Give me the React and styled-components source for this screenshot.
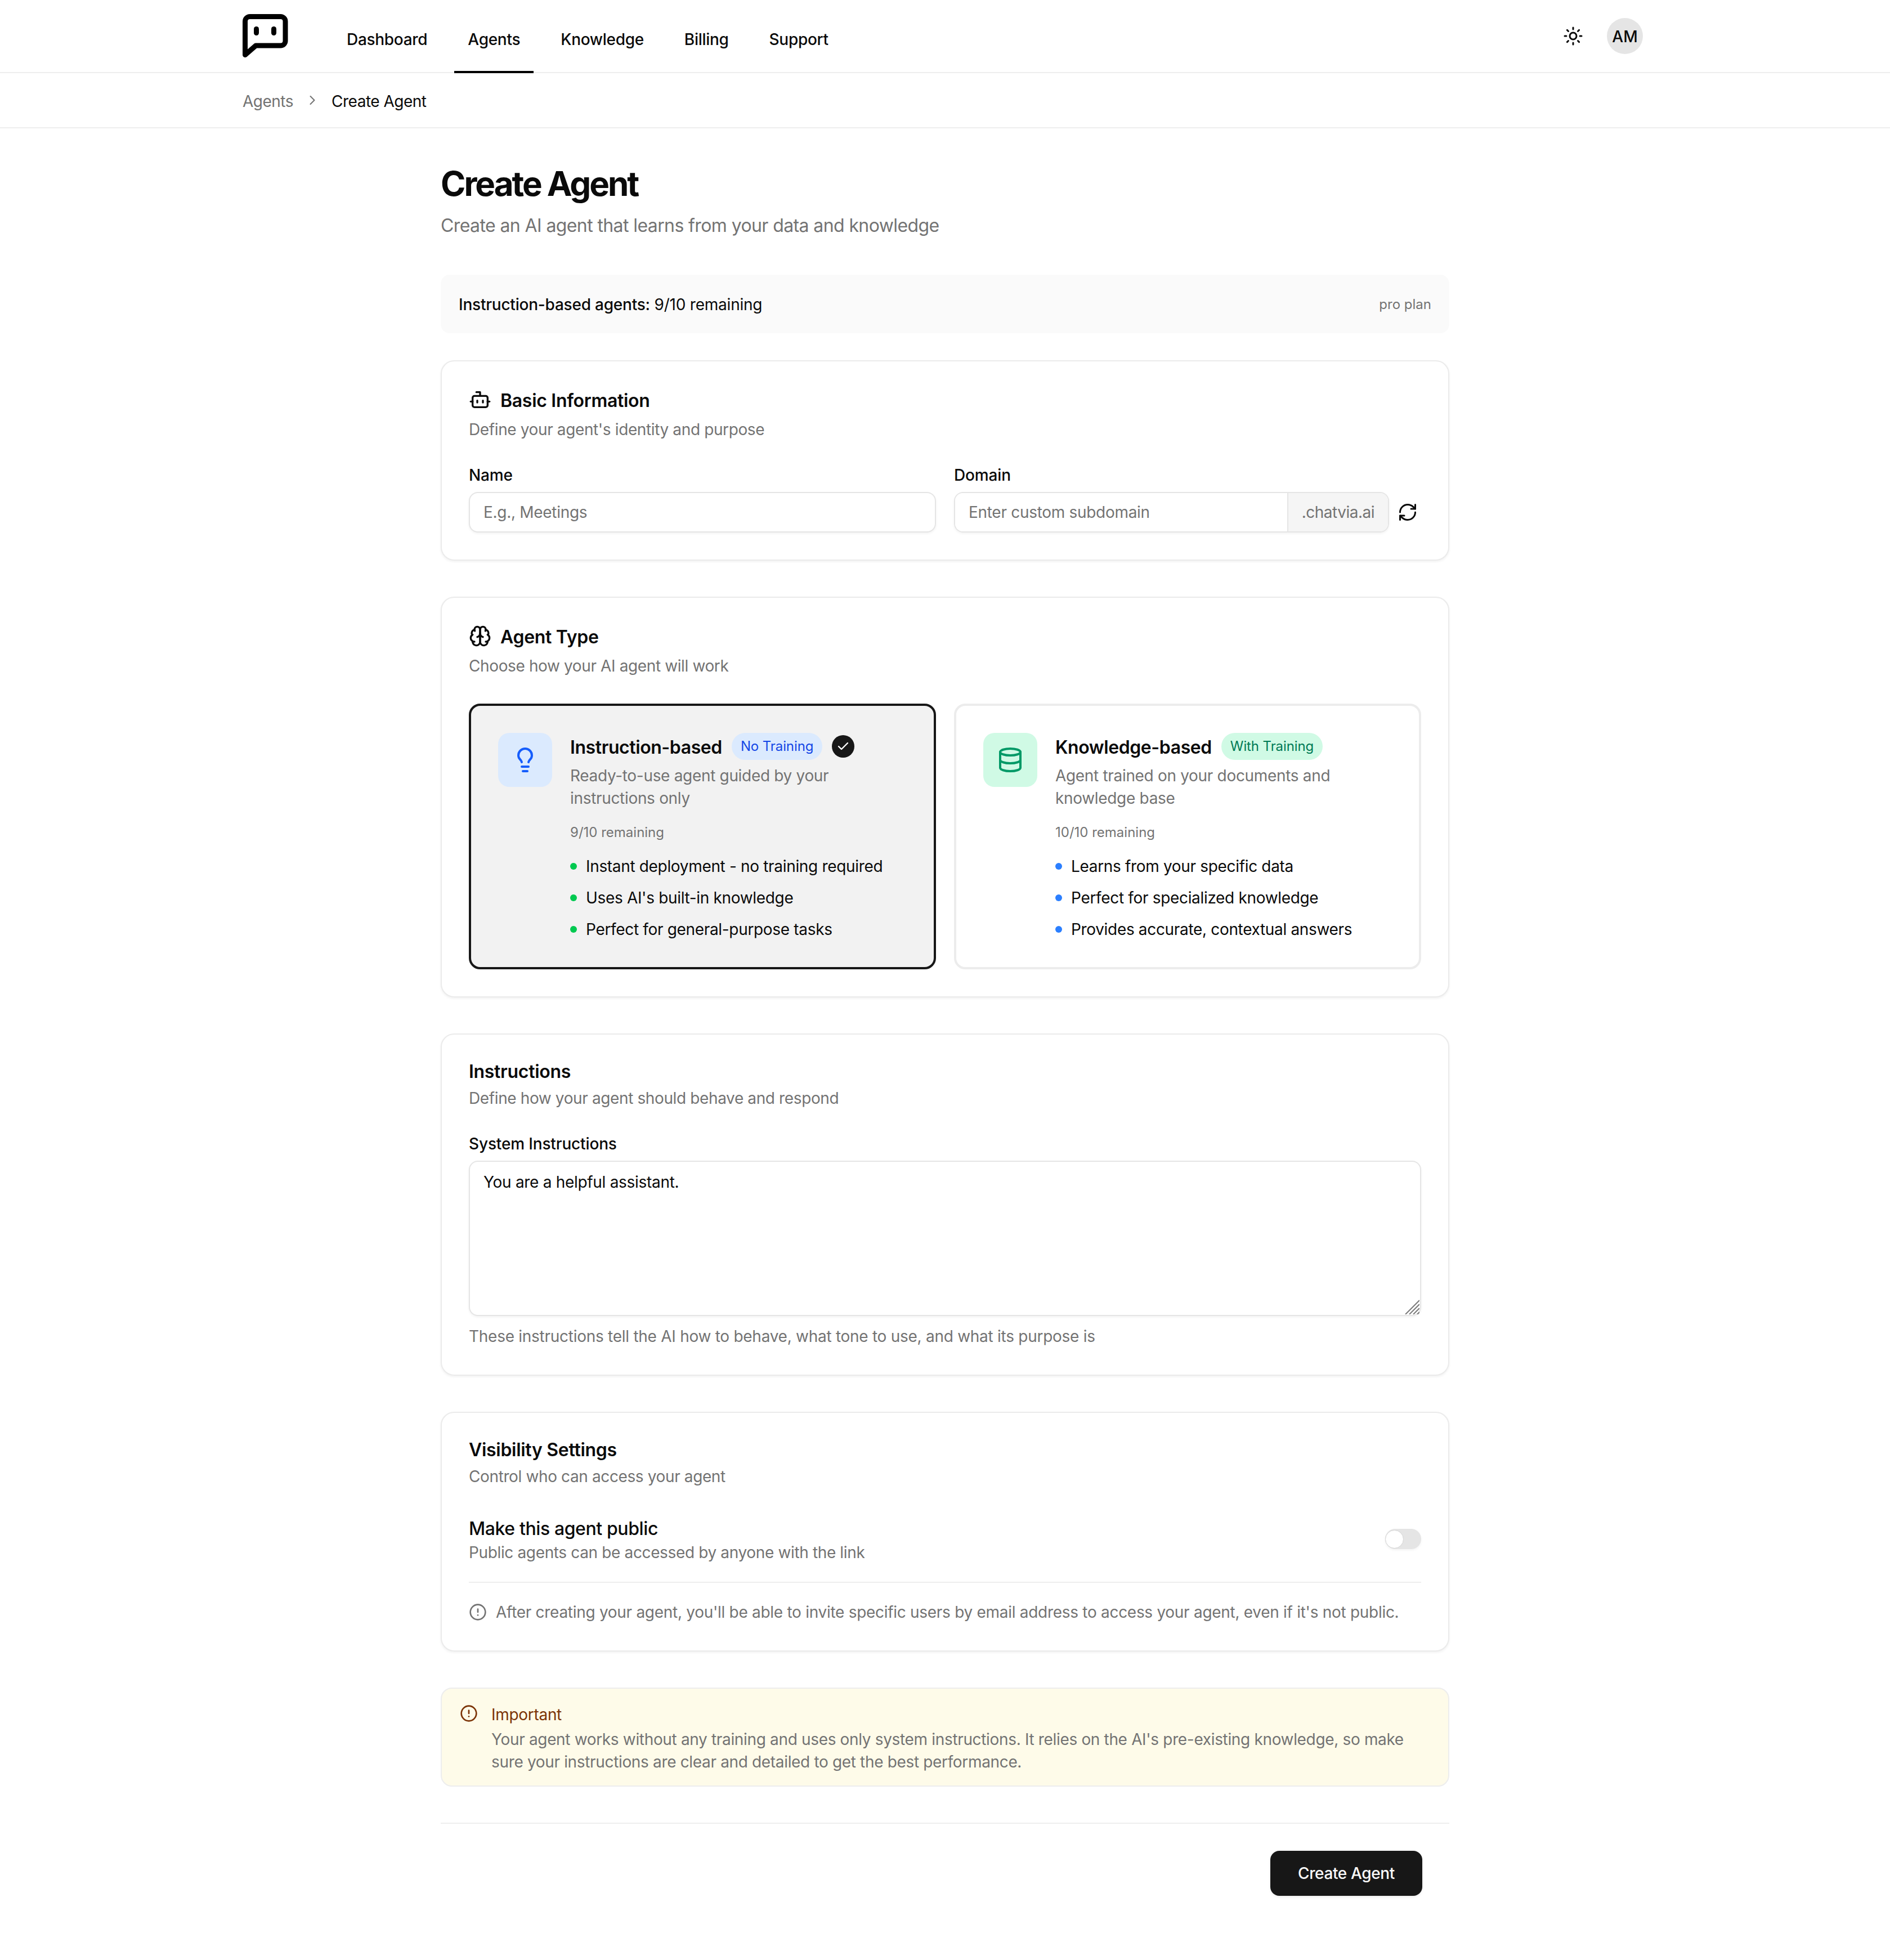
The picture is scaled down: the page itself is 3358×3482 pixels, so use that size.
import React from "react";
import styled, { createGlobalStyle, css } from "styled-components";
import { Sun, Bot, Lightbulb, Database, RefreshCw, CircleAlert, ChevronRight, Check } from "lucide-react";

const Global = createGlobalStyle`
  * { box-sizing: border-box; }
  html, body { margin: 0; padding: 0; background: #fff; }
  body {
    font-family: Inter, "Liberation Sans", sans-serif;
    font-size: 28px;
    line-height: 40px;
    letter-spacing: -0.3px;
    color: #0a0a0a;
  }
  input, textarea, button { font-family: inherit; }
`;

const Header = styled.header`
  height: 130px;
  border-bottom: 2px solid #eeeeee;
`;
const HeaderInner = styled.div`
  width: 2560px;
  height: 100%;
  margin: 0 auto;
  padding: 0 40px 0 32px;
  display: flex;
  align-items: center;
`;
const LogoMark = styled.svg`
  width: 81px;
  height: 78px;
  flex: none;
  display: block;
`;
const Nav = styled.nav`
  align-self: flex-end;
  display: flex;
  gap: 24px;
  height: 122px;
  margin: 0 0 -2px 80px;
`;
const Tab = styled.a`
  display: flex;
  align-items: center;
  padding: 6px 24px 0;
  font-weight: 500;
  letter-spacing: -0.3px;
  color: #0a0a0a;
  border-bottom: 4px solid ${(p) => (p.$active ? "#000" : "transparent")};
`;
const HeaderTools = styled.div`
  margin-left: auto;
  display: flex;
  align-items: center;
  gap: 42px;
`;
const Avatar = styled.div`
  width: 64px;
  height: 64px;
  padding-top: 1px;
  border-radius: 50%;
  background: #e5e5e5;
  display: flex;
  align-items: center;
  justify-content: center;
  font-weight: 500;
  letter-spacing: 0;
`;
const CrumbBar = styled.div`
  height: 98px;
  border-bottom: 2px solid #eeeeee;
`;
const CrumbInner = styled.div`
  width: 2560px;
  height: 100%;
  margin: 0 auto;
  padding: 0 32px;
  display: flex;
  align-items: center;
  gap: 20px;
`;
const CrumbLink = styled.span`
  padding-top: 3px;
  letter-spacing: -0.5px;
  color: #737373;
`;
const CrumbCurrent = styled.span`
  padding-top: 3px;
  letter-spacing: -0.5px;
  color: #0a0a0a;
`;
const Main = styled.main`
  width: 1792px;
  margin: 0 auto;
  padding: 64px 0 114px;
`;
const PageTitle = styled.h1`
  margin: 0;
  font-size: 60px;
  line-height: 68px;
  font-weight: 700;
  letter-spacing: -3px;
  color: #0a0a0a;
`;
const PageSub = styled.p`
  margin: 17px 0 63px;
  font-size: 32px;
  line-height: 48px;
  letter-spacing: -0.6px;
  color: #737373;
`;
const Usage = styled.div`
  height: 104px;
  margin-bottom: 48px;
  padding: 1px 32px 0;
  border-radius: 16px;
  background: #fafafa;
  display: flex;
  align-items: center;
  justify-content: space-between;
  letter-spacing: -0.22px;
`;
const UsageStrong = styled.span`
  font-weight: 500;
`;
const UsagePlan = styled.span`
  font-size: 24px;
  letter-spacing: 0;
  color: #737373;
`;
const Form = styled.form`
  display: flex;
  flex-direction: column;
  gap: 64px;
`;
const Card = styled.section`
  padding: 48px;
  background: #fff;
  border: 2px solid #ebebeb;
  border-radius: 24px;
  box-shadow: 0 2px 4px rgba(0, 0, 0, 0.06);
`;
const CardHead = styled.div`
  display: flex;
  align-items: center;
  gap: 16px;
  font-size: 32px;
  font-weight: 600;
  letter-spacing: -0.3px;
  color: #0a0a0a;
`;
const CardHeadText = styled.span`
  line-height: 36px;
  margin-bottom: -4px;
`;
const CardSub = styled.p`
  margin: 13px 0 47px;
  letter-spacing: -0.38px;
  color: #737373;
`;
const TwoCols = styled.div`
  display: grid;
  grid-template-columns: 1fr 1fr;
  gap: 32px;
`;
const Label = styled.label`
  display: block;
  font-weight: 500;
  line-height: 28px;
  letter-spacing: -0.15px;
  margin-bottom: 16px;
`;
const fieldText = css`
  font-size: 28px;
  line-height: 40px;
  letter-spacing: -0.3px;
  color: #0a0a0a;
  &::placeholder {
    color: #737373;
    opacity: 1;
  }
`;
const TextInput = styled.input`
  ${fieldText}
  display: block;
  width: 100%;
  height: 72px;
  padding: 0 24px;
  border: 2px solid #e5e5e5;
  border-radius: 16px;
  background: #fff;
  box-shadow: 0 2px 4px rgba(0, 0, 0, 0.05);
  outline: none;
`;
const DomainRow = styled.div`
  display: flex;
  align-items: center;
  gap: 8px;
`;
const DomainGroup = styled.div`
  flex: 1;
  display: flex;
  height: 72px;
  border: 2px solid #e5e5e5;
  border-radius: 16px;
  overflow: hidden;
  box-shadow: 0 2px 4px rgba(0, 0, 0, 0.05);
`;
const DomainInput = styled.input`
  ${fieldText}
  flex: 1;
  min-width: 0;
  padding: 0 24px;
  border: 0;
  outline: none;
  background: #fff;
`;
const DomainSuffix = styled.span`
  display: flex;
  align-items: center;
  padding: 0 24px;
  border-left: 2px solid #e5e5e5;
  background: #f5f5f5;
  letter-spacing: -0.5px;
  color: #737373;
`;
const IconButton = styled.button`
  width: 49px;
  height: 72px;
  flex: none;
  padding: 0;
  border: 0;
  background: transparent;
  color: #0a0a0a;
  display: flex;
  align-items: center;
  justify-content: center;
`;
const OptionCard = styled.div`
  display: flex;
  gap: 32px;
  height: 472px;
  padding: 48px;
  border: 4px solid ${(p) => (p.$selected ? "#171717" : "#ececec")};
  border-radius: 20px;
  background: ${(p) => (p.$selected ? "#f2f2f2" : "#fff")};
`;
const toneBg = { blue: "#dbeafe", green: "#d0fae5" };
const IconTile = styled.div`
  width: 96px;
  height: 96px;
  flex: none;
  border-radius: 20px;
  display: flex;
  align-items: center;
  justify-content: center;
  background: ${(p) => toneBg[p.$tone]};
  color: ${(p) => (p.$tone === "blue" ? "#155dfc" : "#009966")};
`;
const OptionBody = styled.div`
  flex: 1;
  min-width: 0;
`;
const OptionTitleRow = styled.div`
  display: flex;
  align-items: center;
  gap: 17px;
  height: 48px;
`;
const OptionTitle = styled.span`
  font-size: 32px;
  line-height: 40px;
  margin-top: 3px;
  font-weight: 600;
  letter-spacing: -0.42px;
  color: #0a0a0a;
`;
const Pill = styled.span`
  height: 48px;
  padding: 0 16px;
  border-radius: 24px;
  display: flex;
  align-items: center;
  font-size: 24px;
  font-weight: 400;
  letter-spacing: -0.1px;
  background: ${(p) => toneBg[p.$tone]};
  color: ${(p) => (p.$tone === "blue" ? "#1447e6" : "#007a55")};
`;
const CheckBadge = styled.span`
  width: 40px;
  height: 40px;
  border-radius: 50%;
  background: #171717;
  color: #fff;
  display: flex;
  align-items: center;
  justify-content: center;
`;
const OptionDesc = styled.p`
  margin: 8px 0 25px;
  letter-spacing: -0.32px;
  color: #737373;
`;
const Remaining = styled.div`
  font-size: 24px;
  line-height: 32px;
  letter-spacing: 0;
  color: #737373;
  margin-bottom: 24px;
`;
const Bullets = styled.ul`
  margin: 0;
  padding: 0;
  list-style: none;
  display: flex;
  flex-direction: column;
  gap: 16px;
`;
const Bullet = styled.li`
  display: flex;
  align-items: center;
  gap: 16px;
  letter-spacing: -0.33px;
  color: #0a0a0a;
`;
const Dot = styled.span`
  width: 12px;
  height: 12px;
  flex: none;
  border-radius: 50%;
  background: ${(p) => (p.$tone === "green" ? "#00c950" : "#2b7fff")};
`;
const TextAreaWrap = styled.div`
  position: relative;
`;
const TextArea = styled.textarea`
  ${fieldText}
  display: block;
  width: 100%;
  height: 276px;
  padding: 16px 24px;
  border: 2px solid #e5e5e5;
  border-radius: 16px;
  background: #fff;
  box-shadow: 0 2px 4px rgba(0, 0, 0, 0.05);
  outline: none;
  resize: none;
`;
const Grip = styled.svg`
  position: absolute;
  right: 3px;
  bottom: 3px;
  width: 26px;
  height: 26px;
`;
const Helper = styled.p`
  margin: 16px 0 0;
  letter-spacing: -0.27px;
  color: #737373;
`;
const ToggleRow = styled.div`
  display: flex;
  align-items: center;
  justify-content: space-between;
  padding-bottom: 32px;
  border-bottom: 2px solid #eeeeee;
`;
const ToggleTitle = styled.div`
  font-size: 32px;
  line-height: 52px;
  margin-bottom: -4px;
  font-weight: 500;
  letter-spacing: -0.4px;
  color: #0a0a0a;
`;
const ToggleSub = styled.div`
  letter-spacing: -0.36px;
  color: #737373;
`;
const Switch = styled.span`
  width: 64px;
  height: 36px;
  border-radius: 18px;
  background: #e5e5e5;
  display: flex;
  align-items: center;
  box-shadow: 0 2px 4px rgba(0, 0, 0, 0.05);
`;
const Thumb = styled.span`
  width: 33px;
  height: 33px;
  border-radius: 50%;
  background: #fff;
  border: 1px solid #d4d4d4;
`;
const InfoLine = styled.div`
  display: flex;
  align-items: center;
  gap: 16px;
  padding-top: 32px;
  letter-spacing: -0.29px;
  color: #737373;
`;
const Notice = styled.div`
  display: flex;
  gap: 24px;
  padding: 26px 32px 22px;
  border: 2px solid #ededed;
  border-radius: 20px;
  background: #fefbe9;
`;
const NoticeIcon = styled.div`
  flex: none;
  width: 32px;
  height: 32px;
  margin-top: 2px;
  color: #7b3306;
`;
const NoticeTitle = styled.div`
  color: #7b3306;
  margin-bottom: 4px;
`;
const NoticeText = styled.div`
  letter-spacing: -0.34px;
  color: #737373;
`;
const Footer = styled.div`
  display: flex;
  justify-content: flex-end;
  padding: 48px 48px 0 0;
  border-top: 2px solid #eeeeee;
`;
const Submit = styled.button`
  height: 80px;
  width: 270px;
  border: 0;
  border-radius: 16px;
  background: #171717;
  color: #fafafa;
  font-size: 28px;
  font-weight: 500;
  letter-spacing: -0.37px;
  box-shadow: 0 2px 4px rgba(0, 0, 0, 0.08);
`;
const IconSlot = styled.span`
  flex: none;
  display: flex;
`;

const BrainIcon = () => (
  <svg width="40" height="40" viewBox="0 0 24 24" fill="none" stroke="currentColor" strokeWidth="2" strokeLinecap="round" strokeLinejoin="round">
    <path d="M12 5a3 3 0 1 0-5.997.125 4 4 0 0 0-2.526 5.77 4 4 0 0 0 .556 6.588A4 4 0 1 0 12 18Z" />
    <path d="M12 5a3 3 0 1 1 5.997.125 4 4 0 0 1 2.526 5.77 4 4 0 0 1-.556 6.588A4 4 0 1 1 12 18Z" />
    <path d="M15 13a4.5 4.5 0 0 1-3-4 4.5 4.5 0 0 1-3 4" />
    <path d="M17.599 6.5a3 3 0 0 0 .399-1.375" />
    <path d="M6.003 5.125A3 3 0 0 0 6.401 6.5" />
    <path d="M3.477 10.896a4 4 0 0 1 .585-.396" />
    <path d="M19.938 10.5a4 4 0 0 1 .585.396" />
    <path d="M6 18a4 4 0 0 1-1.967-.516" />
    <path d="M19.967 17.484A4 4 0 0 1 18 18" />
  </svg>
);

const navItems = ["Dashboard", "Agents", "Knowledge", "Billing", "Support"];

const options = [
  {
    key: "instruction",
    tone: "blue",
    dot: "green",
    selected: true,
    Icon: Lightbulb,
    title: "Instruction-based",
    pill: "No Training",
    desc: "Ready-to-use agent guided by your instructions only",
    remaining: "9/10 remaining",
    bullets: ["Instant deployment - no training required", "Uses AI's built-in knowledge", "Perfect for general-purpose tasks"],
  },
  {
    key: "knowledge",
    tone: "green",
    dot: "blue",
    selected: false,
    Icon: Database,
    title: "Knowledge-based",
    pill: "With Training",
    desc: "Agent trained on your documents and knowledge base",
    remaining: "10/10 remaining",
    bullets: ["Learns from your specific data", "Perfect for specialized knowledge", "Provides accurate, contextual answers"],
  },
];

export default function App() {
  return (
    <>
      <Global />
      <Header>
        <HeaderInner>
          <LogoMark viewBox="0 0 81 78" fill="none">
            <path
              d="M4.5 72.5V13A8.5 8.5 0 0 1 13 4.5H67.5A8.5 8.5 0 0 1 76 13V47.5A8.5 8.5 0 0 1 67.5 56H23.5Z"
              stroke="#000"
              strokeWidth="9"
              strokeLinejoin="round"
            />
            <rect x="20" y="22" width="9" height="16" rx="4.5" fill="#000" />
            <rect x="51" y="22" width="9" height="16" rx="4.5" fill="#000" />
          </LogoMark>
          <Nav>
            {navItems.map((n) => (
              <Tab key={n} $active={n === "Agents"}>{n}</Tab>
            ))}
          </Nav>
          <HeaderTools>
            <Sun size={36} strokeWidth={2} color="#0a0a0a" />
            <Avatar>AM</Avatar>
          </HeaderTools>
        </HeaderInner>
      </Header>
      <CrumbBar>
        <CrumbInner>
          <CrumbLink>Agents</CrumbLink>
          <ChevronRight size={28} strokeWidth={1.8} color="#737373" />
          <CrumbCurrent>Create Agent</CrumbCurrent>
        </CrumbInner>
      </CrumbBar>
      <Main>
        <PageTitle>Create Agent</PageTitle>
        <PageSub>Create an AI agent that learns from your data and knowledge</PageSub>
        <Usage>
          <span>
            <UsageStrong>Instruction-based agents:</UsageStrong> 9/10 remaining
          </span>
          <UsagePlan>pro plan</UsagePlan>
        </Usage>
        <Form>
          <Card>
            <CardHead>
              <IconSlot><Bot size={40} /></IconSlot>
              <CardHeadText>Basic Information</CardHeadText>
            </CardHead>
            <CardSub>Define your agent's identity and purpose</CardSub>
            <TwoCols>
              <div>
                <Label>Name</Label>
                <TextInput placeholder="E.g., Meetings" />
              </div>
              <div>
                <Label>Domain</Label>
                <DomainRow>
                  <DomainGroup>
                    <DomainInput placeholder="Enter custom subdomain" />
                    <DomainSuffix>.chatvia.ai</DomainSuffix>
                  </DomainGroup>
                  <IconButton type="button" aria-label="Regenerate">
                    <RefreshCw size={36} />
                  </IconButton>
                </DomainRow>
              </div>
            </TwoCols>
          </Card>

          <Card>
            <CardHead>
              <IconSlot><BrainIcon /></IconSlot>
              <CardHeadText>Agent Type</CardHeadText>
            </CardHead>
            <CardSub>Choose how your AI agent will work</CardSub>
            <TwoCols>
              {options.map((o) => (
                <OptionCard key={o.key} $selected={o.selected}>
                  <IconTile $tone={o.tone}>
                    <o.Icon size={48} />
                  </IconTile>
                  <OptionBody>
                    <OptionTitleRow>
                      <OptionTitle>{o.title}</OptionTitle>
                      <Pill $tone={o.tone}>{o.pill}</Pill>
                      {o.selected && (
                        <CheckBadge><Check size={24} strokeWidth={2.4} /></CheckBadge>
                      )}
                    </OptionTitleRow>
                    <OptionDesc>{o.desc}</OptionDesc>
                    <Remaining>{o.remaining}</Remaining>
                    <Bullets>
                      {o.bullets.map((b) => (
                        <Bullet key={b}>
                          <Dot $tone={o.dot} />
                          {b}
                        </Bullet>
                      ))}
                    </Bullets>
                  </OptionBody>
                </OptionCard>
              ))}
            </TwoCols>
          </Card>

          <Card>
            <CardHead><CardHeadText>Instructions</CardHeadText></CardHead>
            <CardSub>Define how your agent should behave and respond</CardSub>
            <Label>System Instructions</Label>
            <TextAreaWrap>
              <TextArea defaultValue="You are a helpful assistant." />
              <Grip viewBox="0 0 26 26" fill="none" stroke="#7a7a7a" strokeWidth="2">
                <path d="M1 26L26 1M8 26L26 8M15 26L26 15M22 26L26 22" />
              </Grip>
            </TextAreaWrap>
            <Helper>These instructions tell the AI how to behave, what tone to use, and what its purpose is</Helper>
          </Card>

          <Card>
            <CardHead><CardHeadText>Visibility Settings</CardHeadText></CardHead>
            <CardSub>Control who can access your agent</CardSub>
            <ToggleRow>
              <div>
                <ToggleTitle>Make this agent public</ToggleTitle>
                <ToggleSub>Public agents can be accessed by anyone with the link</ToggleSub>
              </div>
              <Switch><Thumb /></Switch>
            </ToggleRow>
            <InfoLine>
              <IconSlot><CircleAlert size={32} color="#737373" /></IconSlot>
              After creating your agent, you'll be able to invite specific users by email address to access your agent, even if it's not public.
            </InfoLine>
          </Card>

          <Notice>
            <NoticeIcon><CircleAlert size={32} /></NoticeIcon>
            <div>
              <NoticeTitle>Important</NoticeTitle>
              <NoticeText>
                Your agent works without any training and uses only system instructions. It relies on the AI's pre-existing knowledge, so make sure your instructions are clear and detailed to get the best performance.
              </NoticeText>
            </div>
          </Notice>

          <Footer>
            <Submit type="button">Create Agent</Submit>
          </Footer>
        </Form>
      </Main>
    </>
  );
}
